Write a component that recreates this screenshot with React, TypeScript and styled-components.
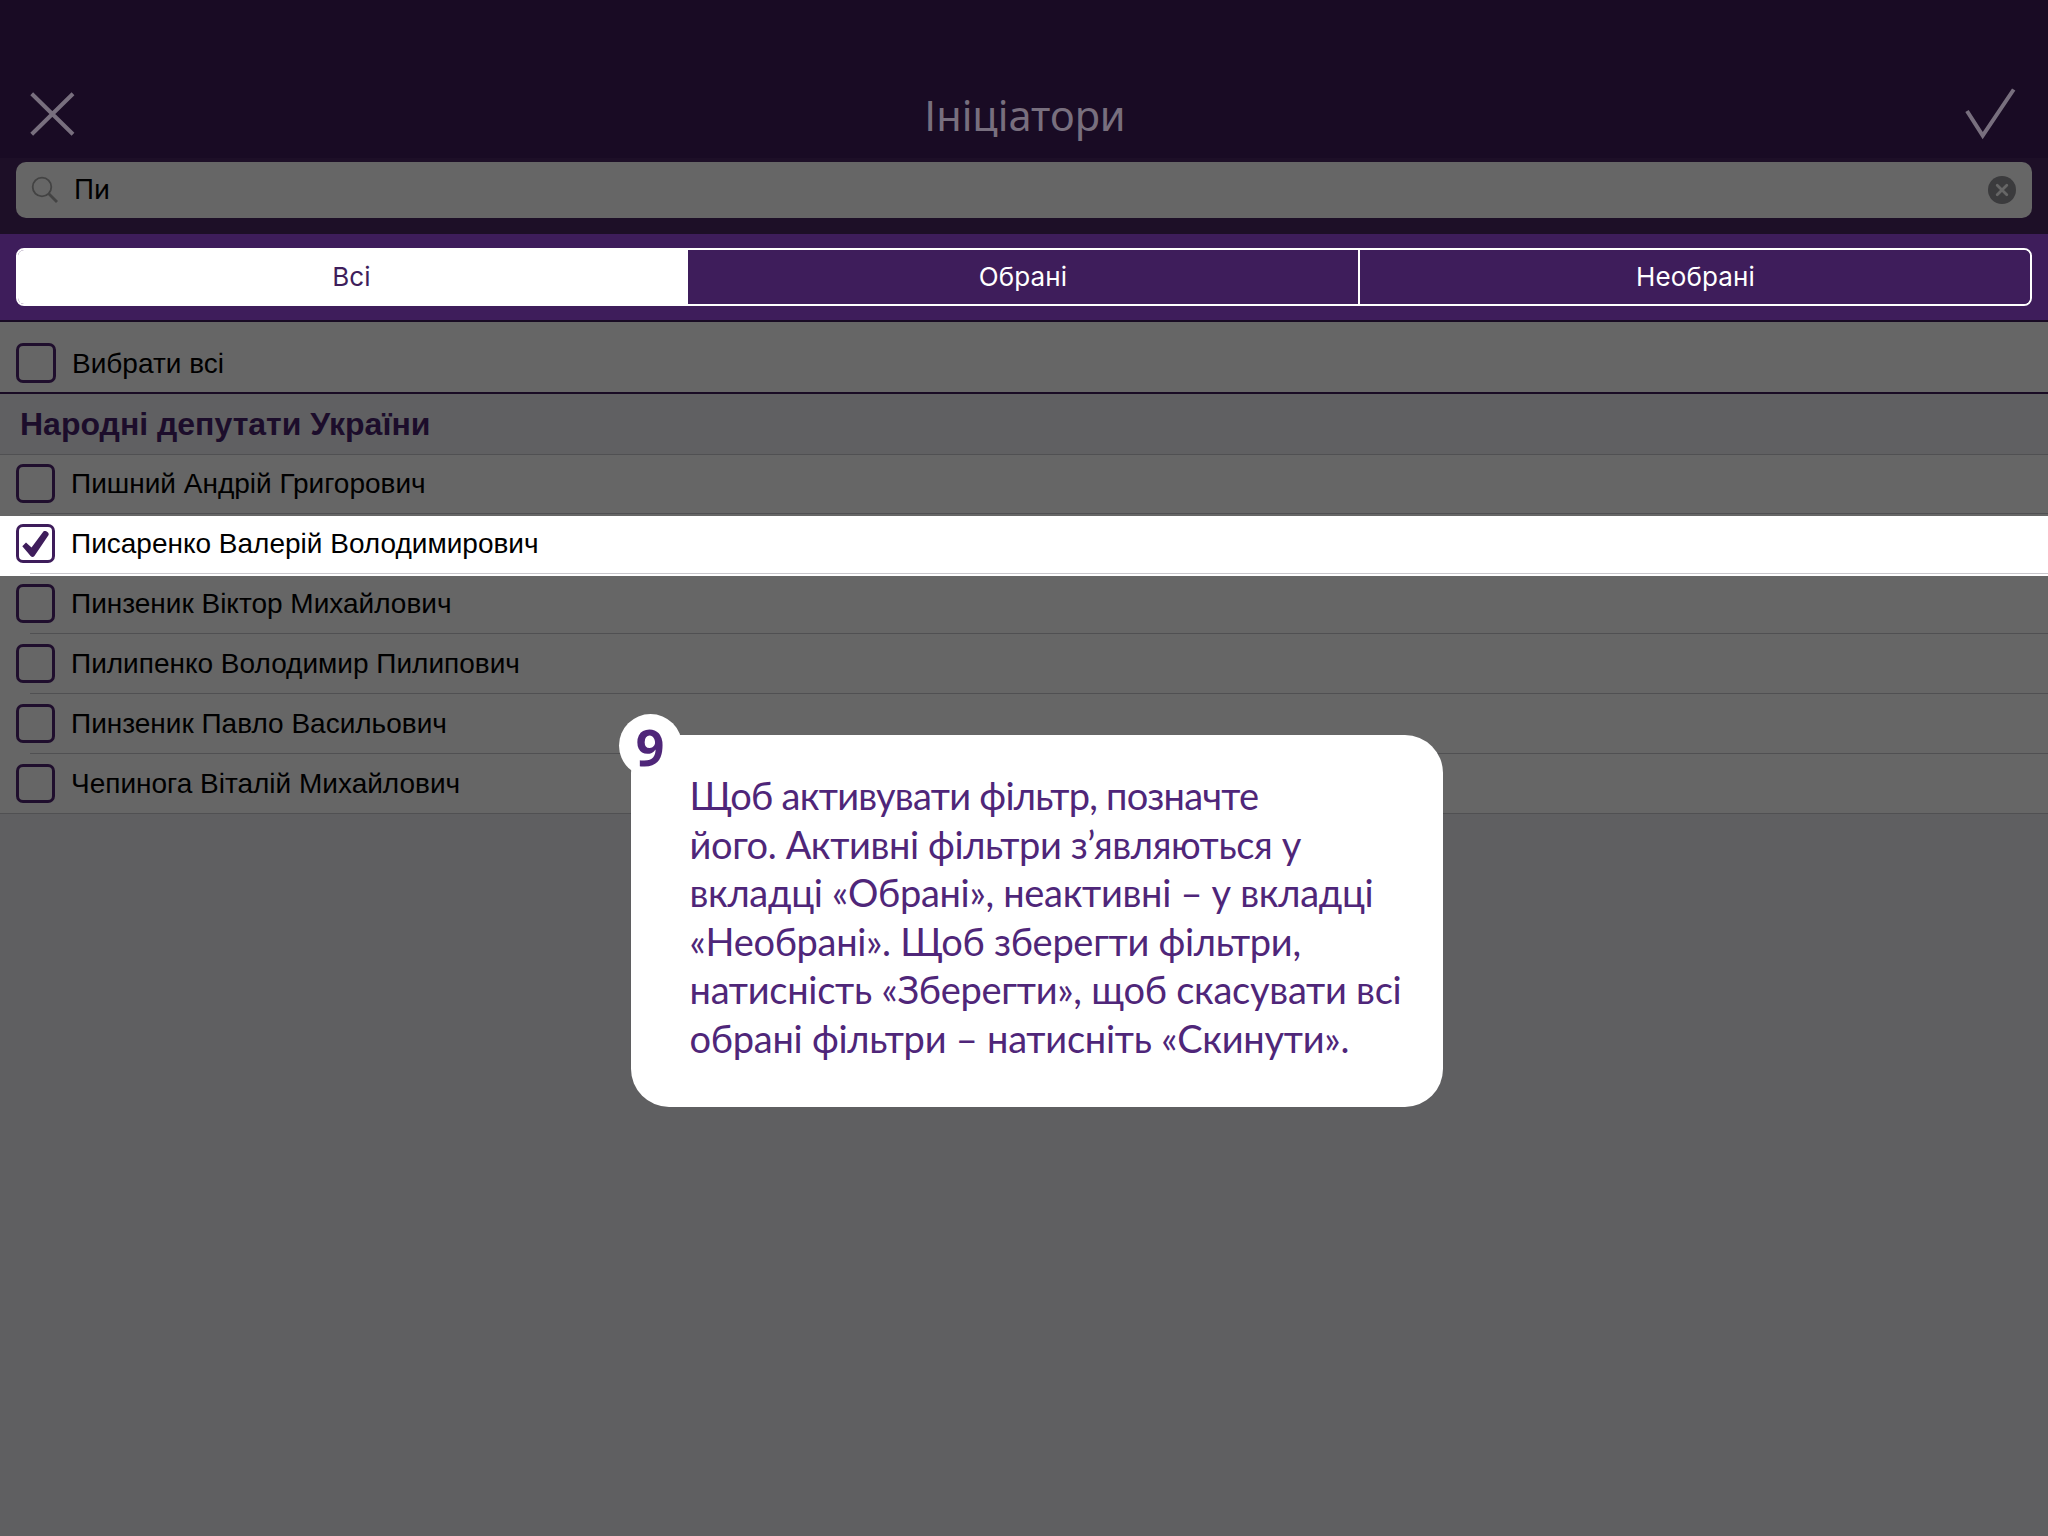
import React from 'react';
import styled, { createGlobalStyle, css } from 'styled-components';

const sans = '"Liberation Sans", Arial, sans-serif';
const system = 'Inter, "Liberation Sans", sans-serif';
const purple = '#3e1d5b';

const GlobalStyle = createGlobalStyle`
  * { box-sizing: border-box; }
  body { margin: 0; background: #5f5f61; overflow: hidden; }
`;

const Screen = styled.main`
  position: relative;
  display: flex;
  flex-direction: column;
  width: 2048px;
  height: 1536px;
  background: #5f5f61;
  overflow: hidden;
`;

const NavBar = styled.header`
  display: flex;
  align-items: center;
  height: 158px;
  padding: 69px 32px 0 30px;
  background: #190b24;
`;

const Title = styled.h1`
  flex: 1;
  margin: 0;
  padding: 2px 0 0 11px;
  text-align: center;
  font: 400 41.5px/60px "Noto Sans", "Open Sans", sans-serif;
  color: #786f7e;
`;

const SearchBar = styled.div`
  height: 76px;
  padding: 4px 16px 16px;
  background: #1d0f27;
`;

const SearchField = styled.div`
  display: flex;
  align-items: center;
  height: 56px;
  padding: 0 16px 0 14px;
  border-radius: 10px;
  background: #666;
`;

const Query = styled.span`
  flex: 1;
  margin-left: 14px;
  font: 400 27px/54px ${system};
  color: #000;
`;

const TabBar = styled.div`
  height: 88px;
  padding: 14px 16px 0;
  background: ${purple};
  border-bottom: 2px solid #190b24;
`;

const Segments = styled.div`
  display: grid;
  grid-template-columns: 670px 670px 1fr;
  height: 58px;
  border: 2px solid #fff;
  border-radius: 8px;
  overflow: hidden;
`;

const Segment = styled.button<{ $active?: boolean; $divided?: boolean }>`
  padding: 0 ${p => (p.$active ? 3 : 0)}px 0 ${p => (p.$divided ? 1 : 0)}px;
  border: 0;
  ${p => p.$divided && css`border-left: 2px solid #fff;`}
  background: ${p => (p.$active ? '#fff' : purple)};
  color: ${p => (p.$active ? purple : '#fff')};
  font: 400 26px/54px ${system};
  letter-spacing: 0.15px;
`;

const SelectAllRow = styled.label`
  display: flex;
  align-items: center;
  height: 72px;
  padding: 12px 0 0 16px;
  background: #666;
  border-bottom: 2px solid #190b24;
`;

const SectionHeader = styled.h2`
  height: 61px;
  margin: 0;
  padding-left: 20px;
  border-bottom: 1px solid #505052;
  background: #606062;
  font: 700 32px/60px ${sans};
  color: #1c0d2b;
`;

const Row = styled.label<{ $first?: boolean; $last?: boolean; $lit?: boolean }>`
  display: flex;
  flex-direction: column;
  height: ${p => (p.$first ? 61 : p.$last ? 58 : 60)}px;
  padding-top: ${p => (p.$first ? 9 : 8)}px;
  background: ${p => (p.$lit ? '#fff' : '#666')};
`;

const RowBody = styled.span`
  display: flex;
  align-items: center;
  height: 39px;
  padding-left: 16px;
`;

const Rule = styled.span<{ $full?: boolean; $lit?: boolean }>`
  height: 1px;
  margin: 10px 0 0 ${p => (p.$full ? 0 : 30)}px;
  background: ${p => (p.$lit ? '#c8c7cc' : '#505052')};
`;

const Box = styled.span<{ $size: number; $lit?: boolean }>`
  display: grid;
  place-items: center;
  width: ${p => p.$size}px;
  height: ${p => p.$size}px;
  border: 3px solid ${p => (p.$lit ? purple : '#1f0e2d')};
  border-radius: 7px;
`;

const Label = styled.span<{ $drop?: number }>`
  margin-left: 16px;
  padding-top: ${p => p.$drop ?? 0}px;
  font: 400 28px/38px ${sans};
  color: #000;
`;

const Callout = styled.aside`
  position: absolute;
  left: 630.5px;
  top: 735px;
  width: 812.5px;
  height: 371.5px;
  padding: 36px 0 0 59px;
  border-radius: 38px;
  background: #fff;
  color: #4f2679;
`;

const Badge = styled.span`
  position: absolute;
  left: -12px;
  top: -21px;
  width: 63px;
  height: 63px;
  border-radius: 50%;
  background: #fff;
  text-align: center;
  font: 700 50px/66px "Noto Sans", "Open Sans", sans-serif;
`;

const Line = styled.span<{ $track: number }>`
  display: block;
  height: 48.5px;
  white-space: nowrap;
  font: 400 38px/48.5px Lato, "Noto Sans", sans-serif;
  letter-spacing: ${p => p.$track}px;
`;

const CloseIcon = () => (
  <svg width="45" height="46" viewBox="30 91 45 46" fill="none" stroke="#786f7e" strokeWidth="4">
    <path d="M31.7 93.7 73 134.3M73 93.7 31.7 134.3" />
  </svg>
);

const DoneIcon = () => (
  <svg width="52" height="54" viewBox="1964 87 52 54" fill="none" stroke="#786f7e" strokeWidth="4">
    <path d="M1967 111 1982.7 135.5 2013.7 89.5" />
  </svg>
);

const SearchIcon = () => (
  <svg width="30" height="30" viewBox="30 175 30 30" fill="none" stroke="#434343">
    <circle cx="42" cy="187" r="9.3" strokeWidth="1.8" />
    <path d="M48.8 193.8 57 202" strokeWidth="2.8" />
  </svg>
);

const ClearIcon = () => (
  <svg width="28" height="28" viewBox="0 0 28 28">
    <circle cx="14" cy="14" r="14" fill="#3b3b3d" />
    <path d="M9.2 9.2 18.8 18.8M18.8 9.2 9.2 18.8" stroke="#666" strokeWidth="2.8" strokeLinecap="round" />
  </svg>
);

const Tick = () => (
  <svg width="33" height="33" viewBox="3 3 33 33" fill={purple}>
    <path d="M6.3 22.3 10 18.4 15.5 23.4 27.4 7.6 C29 6 33.6 8.6 32.6 11 L18.4 32 Q16.6 34 14.6 32 Z" />
  </svg>
);

const people = [
  'Пишний Андрій Григорович',
  'Писаренко Валерій Володимирович',
  'Пинзеник Віктор Михайлович',
  'Пилипенко Володимир Пилипович',
  'Пинзеник Павло Васильович',
  'Чепинога Віталій Михайлович',
];
const selected = 1;

const hint: [string, number][] = [
  ['Щоб активувати фільтр, позначте', -0.72],
  ['його. Активні фільтри з’являються у', -0.38],
  ['вкладці «Обрані», неактивні – у вкладці', -0.3],
  ['«Необрані». Щоб зберегти фільтри,', -0.3],
  ['натисність «Зберегти», щоб скасувати всі', -0.26],
  ['обрані фільтри – натисніть «Скинути».', -0.25],
];

export default function App() {
  return (
    <>
      <GlobalStyle />
      <Screen>
        <NavBar>
          <CloseIcon />
          <Title>Ініціатори</Title>
          <DoneIcon />
        </NavBar>
        <SearchBar>
          <SearchField>
            <SearchIcon />
            <Query>Пи</Query>
            <ClearIcon />
          </SearchField>
        </SearchBar>
        <TabBar>
          <Segments>
            <Segment $active>Всі</Segment>
            <Segment>Обрані</Segment>
            <Segment $divided>Необрані</Segment>
          </Segments>
        </TabBar>
        <SelectAllRow>
          <Box $size={40} />
          <Label $drop={2}>Вибрати всі</Label>
        </SelectAllRow>
        <SectionHeader>Народні депутати України</SectionHeader>
        {people.map((name, i) => {
          const lit = i === selected;
          const last = i === people.length - 1;
          return (
            <Row key={name} $first={i === 0} $last={last} $lit={lit}>
              <RowBody>
                <Box $size={39} $lit={lit}>{lit && <Tick />}</Box>
                <Label>{name}</Label>
              </RowBody>
              <Rule $full={last} $lit={lit} />
            </Row>
          );
        })}
        <Callout>
          <Badge>9</Badge>
          {hint.map(([text, track]) => (
            <Line key={text} $track={track}>{text}</Line>
          ))}
        </Callout>
      </Screen>
    </>
  );
}
